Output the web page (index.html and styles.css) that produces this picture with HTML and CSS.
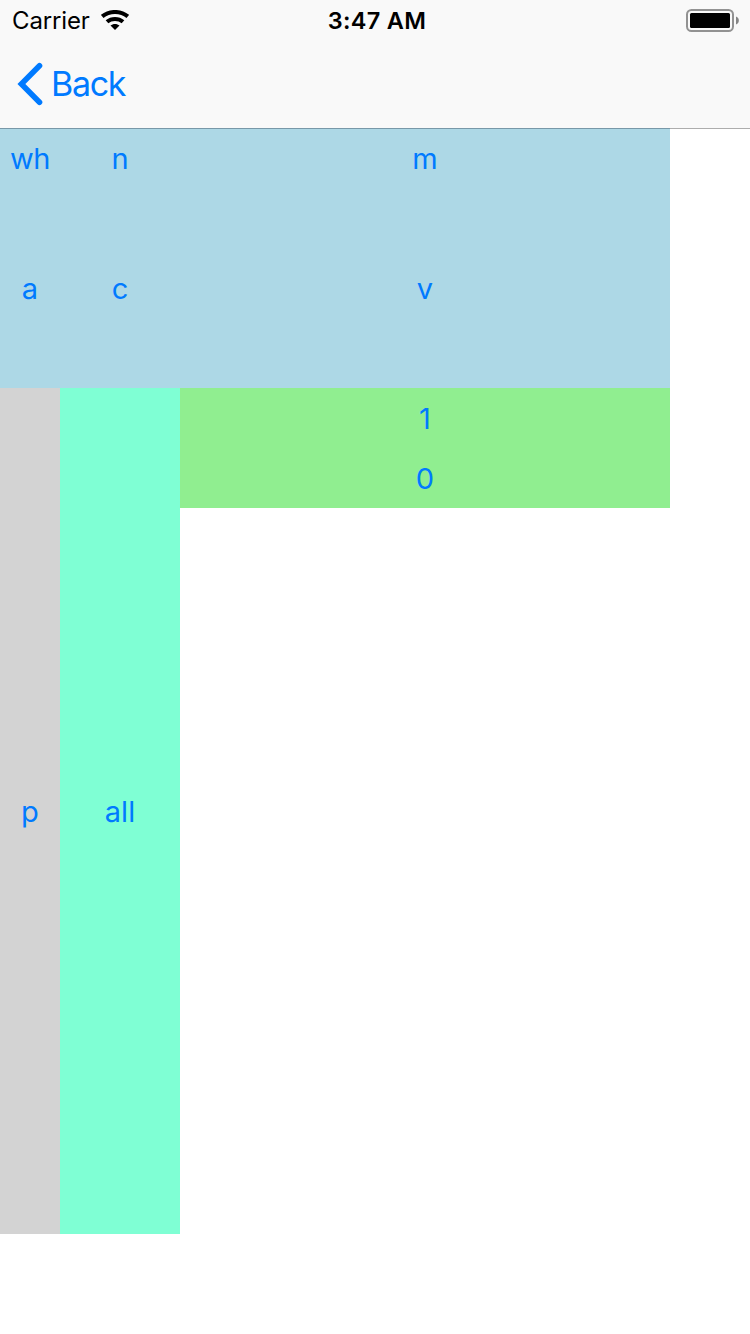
FILE: index.html
```html
<!DOCTYPE html>
<html lang="en">
<head>
<meta charset="utf-8">
<title>Layout</title>
<link rel="stylesheet" href="styles.css">
</head>
<body>
<header class="header">
  <div class="status">
    <div class="status-left">
      <span class="carrier">Carrier</span>
      <svg class="wifi" width="28" height="22" viewBox="0 0 28 22" fill="none" stroke="#000">
        <path d="M1.2 6.5C8.4 0.5 19.6 0.5 26.8 6.5" stroke-width="4.1"/>
        <path d="M6 11.8C10.5 7.9 17.5 7.9 22 11.8" stroke-width="4"/>
        <path d="M14 20l-4.5-4.4c2.4-2.3 6.6-2.3 9 0z" fill="#000" stroke="none"/>
      </svg>
    </div>
    <span class="time">3:47 AM</span>
    <svg class="battery" width="54" height="24" viewBox="0 0 54 24">
      <rect x="1" y="1" width="46" height="21" rx="4.5" fill="none" stroke="#929292" stroke-width="2"/>
      <rect x="4" y="4" width="40" height="15" rx="1.5" fill="#000"/>
      <path d="M50 7.5c3.8 1.3 3.8 6.7 0 8z" fill="#858585"/>
    </svg>
  </div>
  <a class="back">
    <svg width="26" height="44" viewBox="0 0 26 44" fill="none" stroke="#007aff" stroke-width="5.6" stroke-linecap="round" stroke-linejoin="miter">
      <path d="M22.5 3.8L4.4 22L22.5 40.2"/>
    </svg>
    <span class="back-label">Back</span>
  </a>
</header>
<main class="grid">
  <section class="top">
    <span class="tight">wh</span><span>n</span><span>m</span>
    <span>a</span><span>c</span><span>v</span>
  </section>
  <section class="bottom">
    <div class="period"><span>p</span></div>
    <div class="all"><span>all</span></div>
    <div class="values"><span>1</span><span>0</span></div>
  </section>
</main>
</body>
</html>
```
FILE: styles.css
```css
body {
  margin: 0;
  width: 750px;
  height: 1334px;
  overflow: hidden;
  background: #fff;
  font-family: Inter, "Liberation Sans", sans-serif;
  color: #007aff;
}

.header {
  box-sizing: border-box;
  height: 129px;
  background: #f9f9f9;
  border-bottom: 1px solid #adadad;
}

.status {
  box-sizing: border-box;
  display: grid;
  grid-template-columns: 1fr auto 1fr;
  align-items: center;
  height: 41px;
  padding: 1px 10px 0 12px;
  color: #000;
}

.status-left {
  display: flex;
  align-items: center;
  gap: 12px;
}

.carrier {
  width: 77px;
  font-size: 24px;
  line-height: 40px;
  letter-spacing: -0.15px;
  white-space: nowrap;
}

.time {
  padding-left: 2px;
  font-size: 23.5px;
  font-weight: 600;
  line-height: 40px;
  letter-spacing: 0.3px;
}

.battery {
  justify-self: end;
}

.back {
  display: flex;
  align-items: center;
  gap: 8px;
  height: 86px;
  padding-left: 17px;
}

.back-label {
  font-size: 34px;
  line-height: 44px;
  letter-spacing: -1.3px;
}

.grid {
  width: 670px;
  font-size: 29px;
  line-height: 60px;
  text-align: center;
}

.top {
  display: grid;
  grid-template-columns: 60px 120px 490px;
  grid-template-rows: 130px 129px;
  line-height: 59px;
  background: #add8e6;
  box-shadow: 0 -1px #7898a8;
}

.tight {
  letter-spacing: -0.5px;
}

.bottom {
  display: grid;
  grid-template-columns: 60px 120px 490px;
  align-items: start;
}

.period,
.all {
  box-sizing: border-box;
  display: grid;
  place-items: center;
  height: 846px;
  padding-top: 2px;
}

.period {
  background: #d3d3d3;
}

.all {
  background: #7fffd4;
}

.values {
  display: grid;
  grid-auto-rows: 60px;
  line-height: 61px;
  background: #90ee90;
}
```
